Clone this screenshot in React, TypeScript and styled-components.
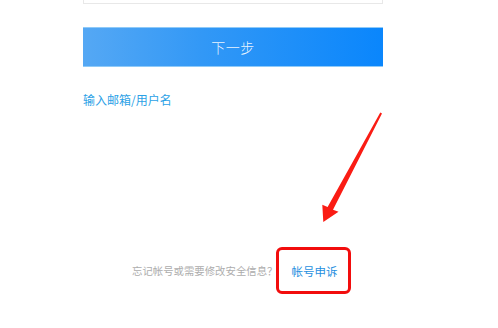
import styled, { createGlobalStyle } from 'styled-components'

const GlobalStyle = createGlobalStyle`
    html, body {
        margin: 0;
        padding: 0;
        background: #ffffff;
    }
    body {
        font-family: "Noto Sans CJK SC", "Noto Sans", sans-serif;
    }
`

const Page = styled.div`
    position: relative;
    width: 498px;
    height: 328px;
    overflow: hidden;
    background: #ffffff;
`

const Form = styled.div`
    display: flex;
    flex-direction: column;
    width: 300px;
    padding-left: 83px;
`

// bottom edge of the input box scrolled out of view
const FieldEdge = styled.div`
    box-sizing: border-box;
    height: 4px;
    border: 1px solid #e8e8e8;
    border-top: none;
    background: #ffffff;
`

const NextButton = styled.button`
    margin-top: 23px;
    height: 40px;
    width: 300px;
    border: none;
    border-top: 1px solid #8fcaf8;
    border-bottom: 1px solid #8fcaf8;
    background: linear-gradient(90deg, #55a8f4 0%, #3298f6 40%, #0a86fc 100%);
    color: rgba(255, 255, 255, 0.92);
    font-family: inherit;
    font-size: 14px;
    font-weight: 300;
    letter-spacing: 0.5px;
    padding: 0;
`

const TextLink = styled.a`
    margin-top: 25px;
    align-self: flex-start;
    font-size: 12px;
    line-height: 16px;
    color: #2ba1e6;
    text-decoration: none;
`

const Footer = styled.div`
    display: flex;
    align-items: center;
    margin-top: 139px;
    margin-left: 49px;
`

const Hint = styled.span`
    font-size: 10.4px;
    line-height: 14px;
    color: #adadad;
    white-space: nowrap;
`

const Highlight = styled.span`
    display: inline-flex;
    align-items: center;
    justify-content: center;
    box-sizing: border-box;
    width: 75px;
    height: 47px;
    margin-left: -1px;
    border: 3px solid #f20d0d;
    border-radius: 6px;
    background: #ffffff;
`

const AppealLink = styled.a`
    font-size: 11.5px;
    line-height: 16px;
    color: #1f8fe0;
    text-decoration: none;
    margin-left: 1px;
`

const Arrow = styled.svg`
    position: absolute;
    left: 0;
    top: 0;
    pointer-events: none;
`

export default function App() {
    return (
        <Page>
            <GlobalStyle />
            <Form>
                <FieldEdge />
                <NextButton>下一步</NextButton>
                <TextLink>输入邮箱/用户名</TextLink>
                <Footer>
                    <Hint>忘记帐号或需要修改安全信息？</Hint>
                    <Highlight>
                        <AppealLink>帐号申诉</AppealLink>
                    </Highlight>
                </Footer>
            </Form>
            <Arrow width="498" height="328" viewBox="0 0 498 328">
                <polygon
                    points="380.3,112.6 382,113.4 333,209.7 338.5,211.8 323.3,222 322.3,204.8 327.6,206.9"
                    fill="#fa1c14"
                />
            </Arrow>
        </Page>
    )
}
